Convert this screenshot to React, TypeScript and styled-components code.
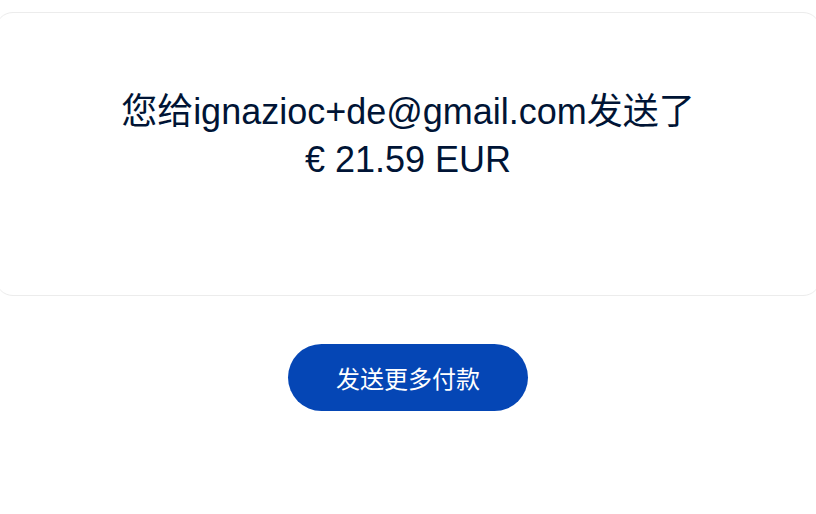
import React from 'react';
import styled, { createGlobalStyle } from 'styled-components';

const GlobalStyle = createGlobalStyle`
  html, body {
    margin: 0;
    padding: 0;
    background: #ffffff;
    overflow: hidden;
  }

  body {
    font-family: "Liberation Sans", Arial, "Noto Sans CJK SC", sans-serif;
  }
`;

const Page = styled.div`
  width: 816px;
  height: 514px;
  padding-top: 12px;
  box-sizing: border-box;
  display: flex;
  flex-direction: column;
  align-items: center;
`;

const ResultCard = styled.section`
  align-self: stretch;
  margin: 0 -5px;
  height: 284px;
  box-sizing: border-box;
  border: 1px solid #ececec;
  border-radius: 18px;
  display: flex;
  align-items: center;
  justify-content: center;
  padding-bottom: 36px;
`;

const Message = styled.h1`
  margin: 0;
  font-size: 36px;
  font-weight: 400;
  line-height: 48px;
  color: #001435;
  text-align: center;
`;

const PrimaryButton = styled.button`
  margin-top: 48px;
  width: 240px;
  height: 67px;
  border: none;
  border-radius: 34px;
  background: #0546b5;
  color: #ffffff;
  font-family: "Liberation Sans", "Noto Sans CJK SC", sans-serif;
  font-size: 24px;
  cursor: pointer;
`;

export default function App() {
  return (
    <>
      <GlobalStyle />
      <Page>
        <ResultCard>
          <Message>
            您给ignazioc+de@gmail.com发送了
            <br />
            € 21.59 EUR
          </Message>
        </ResultCard>
        <PrimaryButton>发送更多付款</PrimaryButton>
      </Page>
    </>
  );
}
